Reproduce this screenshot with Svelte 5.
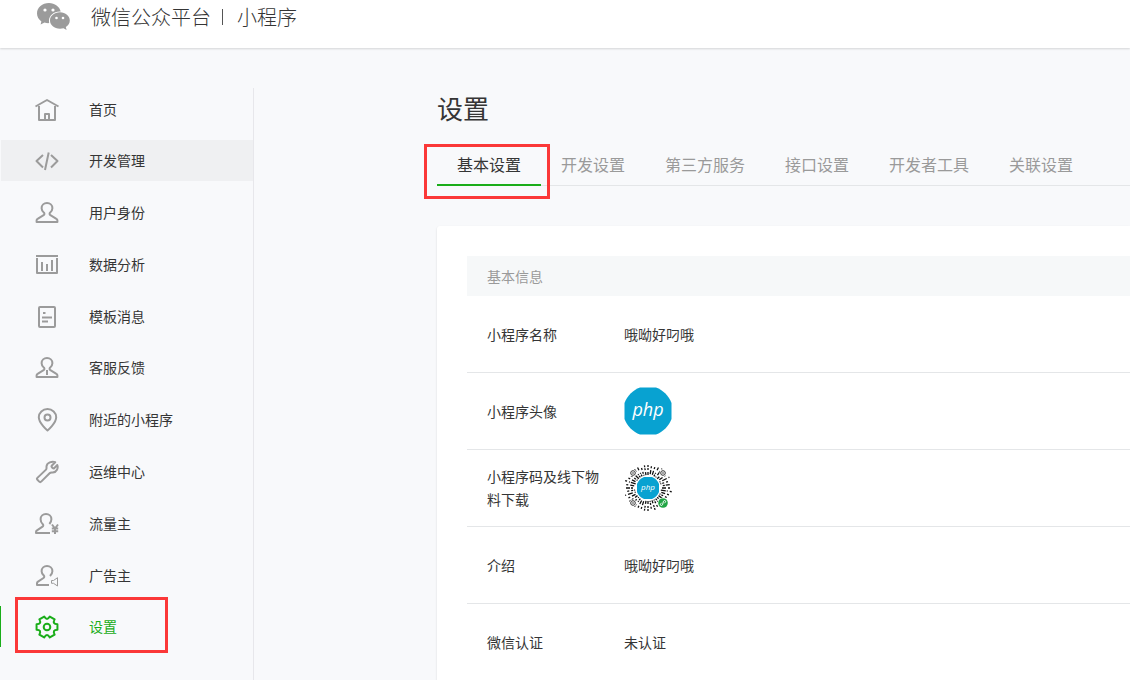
<script lang="ts">
  type NavItem = { icon: string; label: string };

  const navItems: NavItem[] = [
    { icon: "home", label: "首页" },
    { icon: "code", label: "开发管理" },
    { icon: "user", label: "用户身份" },
    { icon: "chart", label: "数据分析" },
    { icon: "message", label: "模板消息" },
    { icon: "service", label: "客服反馈" },
    { icon: "pin", label: "附近的小程序" },
    { icon: "wrench", label: "运维中心" },
    { icon: "traffic", label: "流量主" },
    { icon: "ads", label: "广告主" },
    { icon: "gear", label: "设置" },
  ];

  const tabs = ["基本设置", "开发设置", "第三方服务", "接口设置", "开发者工具", "关联设置"];

  let activeNav = $state("gear");
  let activeTab = $state("基本设置");

  function polar(deg: number, r: number): string {
    const rad = (deg * Math.PI) / 180;
    return `${(12 + r * Math.sin(rad)).toFixed(2)} ${(12 - r * Math.cos(rad)).toFixed(2)}`;
  }

  // six teeth, with a rounded valley between each pair
  const gearPath =
    [30, 90, 150, 210, 270, 330]
      .map((a, i) => `${i ? "L" : "M"}${polar(a - 15, 10.8)}L${polar(a + 15, 10.8)}Q${polar(a + 30, 5.8)} ${polar(a + 45, 10.8)}`)
      .join("") + "z";

  // radial strokes of the mini program code, one dash pattern per spoke
  const patterns = ["3 2 2 1 2 9", "1 2 5 2 1 9", "5 1 1 2 2 9", "0 2 2 1 4 9", "2 1 1 3 3 9", "0 1 4 2 2 9", "1 1 2 2 2 9"];
  const spokes = Array.from({ length: 40 }, (_, i) => ({
    angle: i * 9,
    dash: patterns[(i * i + 3 * i + (i % 3)) % 7],
  }));
</script>

<header class="header">
  <svg class="logo" viewBox="0 0 34 28" aria-hidden="true">
    <path
      fill="#9b9b9b"
      d="M12 0C5.300 0 0 4.500 0 10.500c0 3.300 1.700 6 4.400 7.900L3.600 21.600l3.900-2c1.500.4 3 .6 4.700.5A8.500 8.500 0 0 1 12 17.800c0-5 4.800-9.200 10.700-9.200h1C22.600 3.500 17.800 0 12 0z"
    />
    <path
      fill="#9b9b9b"
      d="M23 9.300c-5.800 0-10 3.700-10 8.200s4.200 8.200 10 8.200c1.300 0 2.400-.2 3.500-.5l3.100 1.900-.8-3c2.400-1.500 4-3.900 4-6.600 0-4.500-4.300-8.200-9.800-8.200z"
    />
    <circle cx="8" cy="7" r="1.600" fill="#fff" />
    <circle cx="16" cy="7" r="1.600" fill="#fff" />
    <circle cx="19.500" cy="15" r="1.300" fill="#fff" />
    <circle cx="26" cy="15" r="1.300" fill="#fff" />
  </svg>
  <a class="brand" href="#home">
    <span>微信公众平台</span>
    <i class="brand-divider"></i>
    <span>小程序</span>
  </a>
</header>

<div class="body">
  <nav class="sidebar">
    <ul class="nav-list">
      {#each navItems as item (item.icon)}
        <li class="nav-item" class:hovered={item.icon === "code"} class:active={item.icon === activeNav}>
          <a class="nav-link" href="#{item.icon}" onclick={() => (activeNav = item.icon)}>
            <svg class="nav-icon" viewBox="0 0 24 24" aria-hidden="true">
              {#if item.icon === "home"}
                <path d="M.5 8.500 12 2l11.500 6.500M4 8v14h16V8M10 22v-6h4v6" />
              {:else if item.icon === "code"}
                <path d="M8 6 1.500 12 8 18.500M16 6l6.500 6-6.500 6.500M13.700 3.500 10 21" />
              {:else if item.icon === "user"}
                <path d="M9 11.700C7.500 10.500 6.600 9 6.600 7.200 6.600 4 9 2 12 2s5.400 2 5.400 5.200c0 1.800-.9 3.300-2.400 4.500-.7.8-.5 1.900.4 2.500l6 3.700c.7.400 1 .9 1 1.600V21H1.600v-1.500c0-.7.300-1.200 1-1.600l6-3.700c.9-.6 1.100-1.700.4-2.500z" />
              {:else if item.icon === "chart"}
                <path d="M1 3h22M2 5v15h20V5M7 9v9M12 11v7M17 7v11" />
              {:else if item.icon === "message"}
                <rect x="4" y="2" width="16" height="20" rx="1" />
                <path d="M7 12.500h10M7 16.500h6M8 8h2.500" />
              {:else if item.icon === "service"}
                <path d="M9 11.700C7.500 10.500 6.600 9 6.600 7.200 6.600 4 9 2 12 2s5.400 2 5.400 5.200c0 1.800-.9 3.300-2.400 4.500-.7.8-.5 1.900.4 2.500l6 3.700c.7.400 1 .9 1 1.600V21H1.600v-1.500c0-.7.300-1.200 1-1.600l6-3.700c.9-.6 1.100-1.700.4-2.500zM12 14v5" />
              {:else if item.icon === "pin"}
                <path d="M12.500 22.500S3.800 15.200 3.800 9.300a8.700 8.200 0 0 1 17.400 0C21.200 15.200 12.500 22.500 12.500 22.500z" />
                <circle cx="12.500" cy="9.500" r="3" />
              {:else if item.icon === "wrench"}
                <path d="M20.200 2.200c-3-1.300-8.500.3-8.700 4.300-.1 1.500.4 2.200-.5 3.100l-8.600 8.300c-.7.700-.7 1.200 0 1.900l1.800 1.800c.7.700 1.300.7 2 0l8.400-8.400c.8-.8 1.900-.5 3.200-.6 4-.3 5.700-4.600 4.500-7.600l-3.200 3.300c-.7.700-3.300-1.500-2.400-2.500z" />
              {:else if item.icon === "traffic"}
                <path d="M15 21H1v-1c0-.7.400-1.200 1-1.600l5.500-3.700c.9-.6 1-1.700.3-2.500C6.500 11 5.600 9.200 5.600 7.200 5.600 4 8 2 11 2s5.400 2 5.400 5.200c0 2-.9 3.500-2 4.800" />
                <path d="m17 12.500 3 4 3-4M20 16.500V22M16.800 16.500h6.400M16.800 19.200h6.400" />
              {:else if item.icon === "ads"}
                <path d="M14 21H2v-1.700c0-.7.400-1.200 1-1.600l5.500-3.700c.9-.6 1-1.700.3-2.500C7.500 10.200 6.600 9 6.600 7.200 6.600 4 9 2 12 2s5.400 2 5.400 5.200c0 2-.9 3.300-2.400 4.800" />
                <path class="thin" d="M16.500 16.500v2.800h2l4 2.700v-8.300l-4 2.800z" />
              {:else}
                <path d={gearPath} />
                <circle cx="12" cy="12" r="3.300" />
              {/if}
            </svg>
            <span>{item.label}</span>
          </a>
        </li>
      {/each}
    </ul>
  </nav>

  <main class="main">
    <h1 class="title">设置</h1>
    <div class="tabs" role="tablist">
      {#each tabs as tab (tab)}
        <button
          type="button"
          role="tab"
          class="tab"
          class:selected={tab === activeTab}
          aria-selected={tab === activeTab}
          onclick={() => (activeTab = tab)}
        >{tab}</button>
      {/each}
    </div>

    <section class="card">
      <h2 class="card-title">基本信息</h2>
      <table class="info">
        <tbody>
          <tr>
            <th scope="row">小程序名称</th>
            <td>哦呦好叼哦</td>
          </tr>
          <tr>
            <th scope="row">小程序头像</th>
            <td>
              <svg class="picture" viewBox="0 0 48 48" role="img" aria-label="php">
                <path fill="#08a2d1" d="M16 .5h16C39 3 45 9 47.500 16v16C45 39 39 45 32 47.500H16C9 45 3 39 .5 32V16C3 9 9 3 16 .5z" />
                <text class="php" x="24" y="29" font-size="18">php</text>
              </svg>
            </td>
          </tr>
          <tr>
            <th scope="row">小程序码及线下物料下载</th>
            <td>
              <svg class="picture" viewBox="0 0 48 48" role="img" aria-label="小程序码">
                {#each spokes as spoke (spoke.angle)}
                  <line
                    x1="24"
                    y1="11"
                    x2="24"
                    y2="0"
                    stroke="#111"
                    stroke-width="1.300"
                    stroke-dasharray={spoke.dash}
                    transform="rotate({spoke.angle} 24 24)"
                  />
                {/each}
                {#each [[9, 9], [39, 9], [9, 39]] as [cx, cy]}
                  <circle {cx} {cy} r="3.500" fill="#fff" />
                  <circle {cx} {cy} r="2.300" fill="none" stroke="#333" />
                  <circle {cx} {cy} r="0.800" fill="#333" />
                {/each}
                <path fill="#08a2d1" d="M20 13h8c3.400 1.300 5.700 3.600 7 7v8c-1.300 3.400-3.600 5.700-7 7h-8c-3.400-1.300-5.700-3.600-7-7v-8c1.300-3.400 3.600-5.700 7-7z" />
                <text class="php" x="24" y="26" font-size="8">php</text>
                <circle cx="39" cy="39" r="5.500" fill="#fff" />
                <circle cx="39" cy="39" r="4.800" fill="#21a544" />
                <path
                  d="M37.500 39.200c-1.500.2-1.600 2.300 0 2.300 2.200 0 .8-5 3-5 1.600 0 1.500 2.100 0 2.300"
                  fill="none"
                  stroke="#fff"
                />
              </svg>
            </td>
          </tr>
          <tr>
            <th scope="row">介绍</th>
            <td>哦呦好叼哦</td>
          </tr>
          <tr>
            <th scope="row">微信认证</th>
            <td>未认证</td>
          </tr>
        </tbody>
      </table>
    </section>
  </main>
</div>

<style>
  :global(body) {
    background-color: #f8f9fb;
    color: #353535;
    font-family: "Noto Sans CJK SC", sans-serif;
    font-size: 14px;
  }

  .header {
    position: relative;
    display: flex;
    align-items: flex-start;
    gap: 20px;
    height: 48px;
    padding-left: 37px;
    box-sizing: border-box;
    background-color: #fff;
    box-shadow: 0 1px 2px rgba(0, 0, 0, 0.15);
  }

  .logo {
    width: 34px;
    height: 28px;
    margin-top: 3px;
  }

  .brand {
    display: flex;
    align-items: center;
    color: #353535;
    font-size: 20px;
    font-weight: 300;
    line-height: 34px;
    text-decoration: none;
  }

  .brand-divider {
    width: 1px;
    height: 16px;
    margin: 0 14px 0 11px;
    background-color: #555;
  }

  .body {
    display: flex;
    align-items: stretch;
    min-height: calc(100vh - 48px);
    padding-top: 40px;
    box-sizing: border-box;
  }

  .sidebar {
    flex: 0 0 253px;
    border-right: 1px solid #e7e7eb;
  }

  .nav-list {
    display: flex;
    flex-direction: column;
    justify-content: space-between;
    min-height: 559px;
    margin: 0;
    padding: 0;
    list-style: none;
  }

  .nav-item {
    position: relative;
    padding-left: 1px;
  }

  .nav-link {
    display: flex;
    align-items: center;
    gap: 30px;
    height: 41px;
    padding-left: 34px;
    color: #353535;
    text-decoration: none;
  }

  .hovered .nav-link {
    background-color: #eff0f2;
  }

  .active {
    border-left: 1px solid #1aad19;
    padding-left: 0;
  }

  .active .nav-link {
    color: #1aad19;
  }

  .active::after {
    content: "";
    position: absolute;
    top: -9px;
    left: 14px;
    width: 147px;
    height: 50px;
    border: 3px solid #fb3838;
    pointer-events: none;
  }

  .nav-icon {
    width: 24px;
    height: 24px;
    margin-top: 2px;
    fill: none;
    stroke: #9b9b9b;
    stroke-linejoin: round;
    stroke-width: 2;
  }

  .nav-icon .thin {
    stroke-width: 1;
  }

  .active .nav-icon {
    stroke: #1aad19;
  }

  .main {
    flex: 1;
    min-width: 0;
    margin-left: 183px;
  }

  .title {
    margin: 0;
    font-size: 26px;
    font-weight: 400;
    line-height: 40px;
  }

  .tabs {
    display: flex;
    margin-top: 16px;
    border-bottom: 1px solid #e4e6e8;
  }

  .tab {
    position: relative;
    flex-shrink: 0;
    height: 42px;
    margin-bottom: -1px;
    padding: 0 20px;
    border: 0;
    border-bottom: 2px solid transparent;
    background: none;
    color: #9a9a9a;
    font-family: inherit;
    font-size: 16px;
    cursor: pointer;
  }

  .selected {
    border-bottom-color: #1aad19;
    color: #353535;
  }

  .selected::after {
    content: "";
    position: absolute;
    top: 0;
    right: -9px;
    bottom: -15px;
    left: -13px;
    border: 3px solid #fb3838;
    pointer-events: none;
  }

  .card {
    margin-top: 40px;
    padding: 30px 0 0 30px;
    border-top-left-radius: 3px;
    background-color: #fff;
    box-shadow: 0 1px 2px rgba(0, 0, 0, 0.15);
  }

  .card-title {
    margin: 0;
    padding-left: 20px;
    background-color: #f6f8f9;
    color: #9a9a9a;
    font-size: 14px;
    font-weight: 400;
    line-height: 40px;
  }

  .info {
    width: 100%;
    border-spacing: 0;
    table-layout: fixed;
    line-height: 23px;
  }

  .info th,
  .info td {
    box-sizing: border-box;
    height: 77px;
    padding: 0;
    border-bottom: 1px solid #e4e6e8;
  }

  .info th {
    width: 157px;
    padding: 0 24px 0 20px;
    font-weight: 400;
    text-align: left;
  }

  .info tr:last-child > * {
    border-bottom-color: transparent;
  }

  .picture {
    display: block;
    width: 48px;
    height: 48px;
    overflow: hidden;
  }

  .php {
    fill: #fff;
    font-family: "Open Sans", sans-serif;
    font-style: italic;
    font-weight: 500;
    text-anchor: middle;
  }
</style>
